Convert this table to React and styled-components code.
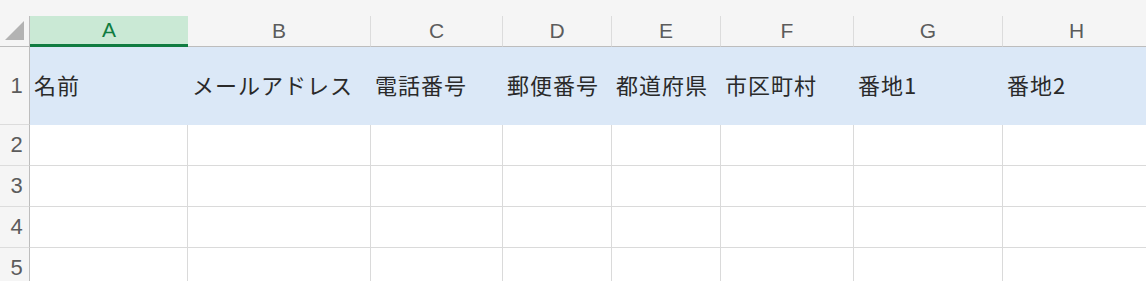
import React from "react";
import styled, { createGlobalStyle } from "styled-components";

const GlobalStyle = createGlobalStyle`
  html, body {
    margin: 0;
    padding: 0;
    background: #ffffff;
    overflow: hidden;
  }
`;

const columns = [
  { key: "A", width: 158 },
  { key: "B", width: 183 },
  { key: "C", width: 132 },
  { key: "D", width: 109 },
  { key: "E", width: 109 },
  { key: "F", width: 133 },
  { key: "G", width: 149 },
  { key: "H", width: 148 },
];

const headings = [
  "名前",
  "メールアドレス",
  "電話番号",
  "郵便番号",
  "都道府県",
  "市区町村",
  "番地1",
  "番地2",
];

const Sheet = styled.div`
  width: 1146px;
  height: 281px;
  overflow: hidden;
  background: #ffffff;
  font-family: "Liberation Sans", Arial, sans-serif;
`;

const TopStrip = styled.div`
  height: 16px;
  background: #f5f5f5;
`;

const Row = styled.div`
  display: flex;
  width: max-content;
`;

const Corner = styled.div`
  box-sizing: border-box;
  width: 30px;
  height: 31px;
  flex: none;
  display: flex;
  align-items: flex-end;
  justify-content: flex-end;
  padding: 0 5px 6px 0;
  background: #f5f5f5;
  border-right: 1px solid #bdbdbd;
  border-bottom: 1px solid #bdbdbd;
`;

const ColHead = styled.div`
  box-sizing: border-box;
  height: 31px;
  flex: none;
  display: flex;
  align-items: center;
  justify-content: center;
  font-size: 21px;
  padding-bottom: 1px;
  color: ${(p) => (p.$active ? "#107c41" : "#5c5c5c")};
  background: ${(p) => (p.$active ? "#cae9d5" : "#f5f5f5")};
  border-right: 1px solid ${(p) => (p.$active ? "#9fd3b3" : "#dcdcdc")};
  border-bottom: ${(p) => (p.$active ? "3px solid #107c41" : "1px solid #bdbdbd")};
  margin-right: ${(p) => (p.$active ? "-1px" : "0")};
  width: ${(p) => (p.$active ? p.$w + 1 : p.$w)}px;
`;

const RowHead = styled.div`
  box-sizing: border-box;
  width: 30px;
  height: ${(p) => p.$h}px;
  flex: none;
  display: flex;
  align-items: center;
  justify-content: center;
  padding-left: 4px;
  font-size: 22px;
  color: #5c5c5c;
  background: #f5f5f5;
  border-right: 1px solid #bdbdbd;
  border-bottom: 1px solid #dcdcdc;
`;

const Cell = styled.div`
  box-sizing: border-box;
  width: ${(p) => p.$w}px;
  height: ${(p) => p.$h}px;
  flex: none;
  display: flex;
  align-items: center;
  padding: 0 0 3px 4px;
  white-space: nowrap;
  font-family: "Noto Sans CJK JP", "Liberation Sans", sans-serif;
  font-size: 22px;
  letter-spacing: 1px;
  color: #2a2a2a;
  background: ${(p) => (p.$fill ? "#dbe8f7" : "#ffffff")};
  border-right: 1px solid ${(p) => (p.$fill ? "#dbe8f7" : "#dadada")};
  border-bottom: 1px solid ${(p) => (p.$fill ? "#dbe8f7" : "#dadada")};
`;

const SelectAll = () => (
  <svg width="19" height="19" viewBox="0 0 19 19">
    <polygon points="19,0 19,19 0,19" fill="#b3b3b3" />
  </svg>
);

export default function App() {
  return (
    <Sheet>
      <GlobalStyle />
      <TopStrip />
      <Row>
        <Corner>
          <SelectAll />
        </Corner>
        {columns.map((c) => (
          <ColHead key={c.key} $w={c.width} $active={c.key === "A"}>
            {c.key}
          </ColHead>
        ))}
      </Row>
      <Row>
        <RowHead $h={78}>1</RowHead>
        {columns.map((c, i) => (
          <Cell key={c.key} $w={c.width} $h={78} $fill>
            {headings[i]}
          </Cell>
        ))}
      </Row>
      {[2, 3, 4, 5].map((n) => (
        <Row key={n}>
          <RowHead $h={41}>{n}</RowHead>
          {columns.map((c) => (
            <Cell key={c.key} $w={c.width} $h={41} />
          ))}
        </Row>
      ))}
    </Sheet>
  );
}
